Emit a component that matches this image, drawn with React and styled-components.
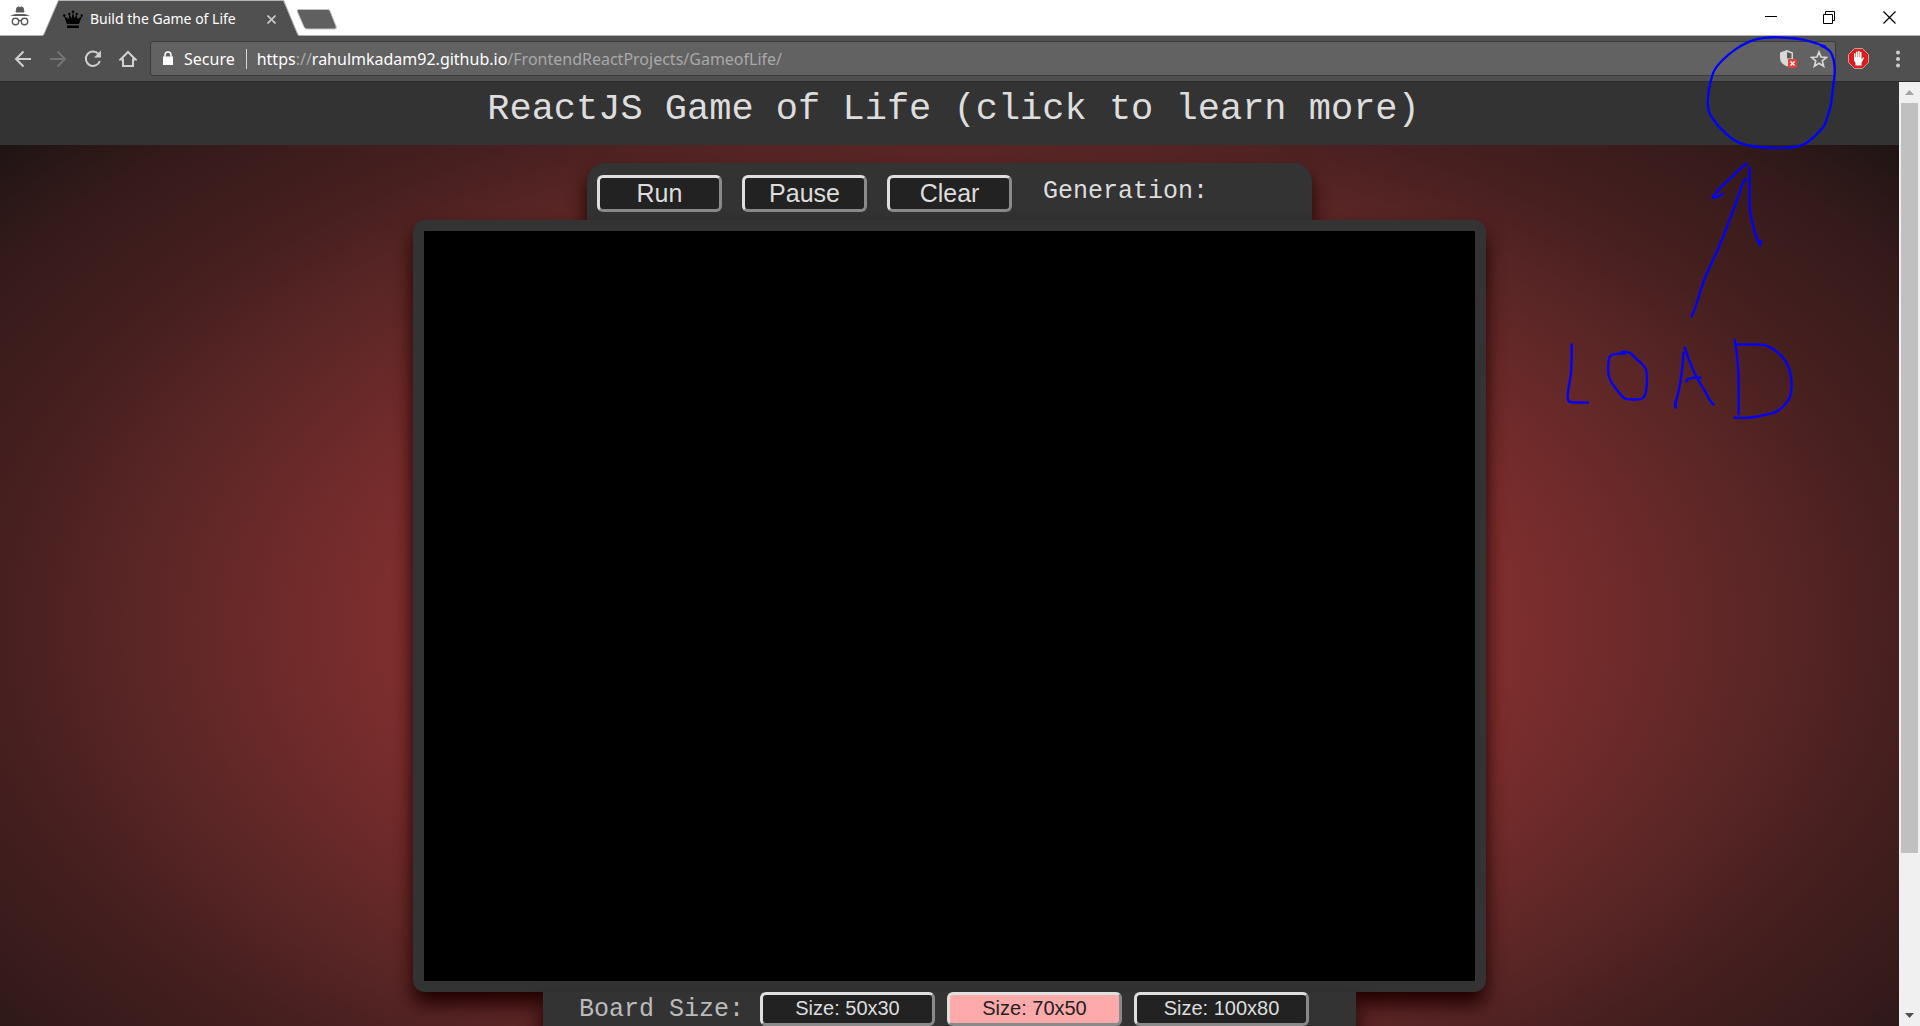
import React from "react";
import styled, { createGlobalStyle } from "styled-components";

const sans = `"Noto Sans", "Open Sans", sans-serif`;
const mono = `"Liberation Mono", "Courier New", monospace`;
const arial = `"Liberation Sans", Arial, sans-serif`;
const panel = "#333333";

const GlobalStyle = createGlobalStyle`
  * { box-sizing: border-box; }
  body { margin: 0; background: #fff; overflow: hidden; }
  button { padding: 0; border: 0; background: none; cursor: pointer; }
  svg { display: block; }
`;

const Browser = styled.div`
  display: flex;
  flex-direction: column;
  height: 100vh;
`;

/* ---------- tab strip ---------- */
const TabStrip = styled.div`
  display: flex;
  align-items: stretch;
  height: 36px;
  flex: none;
  background: linear-gradient(#fff 35px, #b4b4b4 35px);
`;
const Incognito = styled.div`
  padding: 6px 0 0 10px;
  width: 42px;
`;
const Tab = styled.div`
  display: grid;
  width: 257px;
  > * { grid-area: 1 / 1; }
`;
const TabBody = styled.div`
  display: flex;
  align-items: center;
  padding: 2px 24px 0 21px;
  font: 14px/20px ${sans};
  color: #fff;
  z-index: 1;
`;
const TabTitle = styled.span`
  flex: 1;
  margin-left: 7px;
  white-space: nowrap;
`;
const NewTab = styled.button`
  display: flex;
  align-items: flex-start;
  margin-left: -4px;
  padding-top: 8px;
`;
const WindowButtons = styled.div`
  display: flex;
  margin-left: auto;
`;
const WindowButton = styled.button`
  display: grid;
  place-items: center;
  width: 58px;
  height: 34px;
  &:last-child { width: 62px; }
`;

/* ---------- toolbar ---------- */
const Toolbar = styled.div`
  display: flex;
  align-items: center;
  flex: none;
  height: 46px;
  padding: 0 20px 0 13px;
  background: #505050;
  border-bottom: 1px solid #2b2b2b;
`;
const ToolButton = styled.button`
  display: grid;
  place-items: center;
  width: 20px;
  height: 36px;
  margin-right: 15px;
`;
const AddressBar = styled.div`
  display: flex;
  align-items: center;
  flex: 1;
  height: 35px;
  margin-left: -3px;
  padding: 0 7px 0 12px;
  background: #626262;
  border: 1px solid #3a3a3a;
  border-radius: 3px;
  font: 16px/24px ${sans};
  color: #fff;
`;
const Secure = styled.button`
  display: flex;
  align-items: center;
  gap: 11px;
  padding-right: 11px;
  margin-right: 10px;
  border-right: 1px solid #d8d8d8;
  font: 16px/20px ${sans};
  color: #fff;
`;
const Url = styled.div`
  flex: 1;
  white-space: nowrap;
  outline: none;
`;
const Muted = styled.span`
  color: #a9a9a9;
`;
const BarIcons = styled.div`
  display: flex;
  align-items: center;
  gap: 13px;
`;
const Extensions = styled.div`
  display: flex;
  align-items: center;
  gap: 27px;
  margin-left: 12px;
`;

/* ---------- page ---------- */
const Viewport = styled.div`
  display: flex;
  flex: 1;
  min-height: 0;
`;
const Page = styled.div`
  flex: 1;
  overflow: hidden;
`;
const PageBody = styled.div`
  padding-bottom: 48px;
  background: radial-gradient(
    #b83c3c,
    #7f2e2e 41%,
    #582525 62%,
    #471f1f 71%,
    #341a1a 85%,
    #1d1413 95%,
    #141010
  );
`;
const Header = styled.header`
  height: 63px;
  padding: 6px 0 0 8px;
  margin-bottom: 18px;
  background: ${panel};
  text-align: center;
`;
const Title = styled.h1`
  margin: 0;
  font: 400 37px/43px ${mono};
`;
const TitleLink = styled.a`
  color: #ddd;
  text-decoration: none;
`;
const Game = styled.main`
  display: flex;
  flex-direction: column;
  align-items: center;
`;
const Panel = styled.div`
  display: flex;
  background: ${panel};
  box-shadow: 0 12px 19px #200000;
`;
const Controls = styled(Panel)`
  align-items: flex-start;
  gap: 20px;
  width: 725px;
  height: 57px;
  padding: 12px 10px 0;
  border-radius: 19px 19px 0 0;
`;
const Board = styled(Panel)`
  width: 1073px;
  height: 772px;
  border: 11px solid ${panel};
  border-radius: 12px;
  background: #000;
  z-index: 1;
`;
const Sizes = styled(Panel)`
  align-items: flex-start;
  gap: 12px;
  width: 813px;
  height: 129px;
  padding: 0 47px 0 36px;
  z-index: 1;
`;
const GameButton = styled.button`
  width: ${(p) => (p.$small ? 175 : 125)}px;
  height: ${(p) => (p.$small ? 34 : 37)}px;
  padding-bottom: ${(p) => (p.$small ? 2 : 0)}px;
  border: 3px solid;
  border-color: #dfdfdf #8a8a8a #8a8a8a #dfdfdf;
  border-radius: 6px;
  background: ${(p) => (p.$active ? "#ffaaaa" : "#222222")};
  color: ${(p) => (p.$active ? "#222222" : "#dddddd")};
  font: ${(p) => (p.$small ? "20px/26px" : "25px/31px")} ${arial};
`;
const Counter = styled.output`
  margin-left: 11px;
  font: 25px/34px ${mono};
  color: #ddd;
`;
const SizeLabel = styled.span`
  flex: 1;
  font: 25px/36px ${mono};
  color: #bbb;
`;

/* ---------- scrollbar ---------- */
const ScrollBar = styled.div`
  display: flex;
  flex-direction: column;
  align-items: center;
  justify-content: space-between;
  width: 21px;
  background: #f0f0f0;
`;
const ScrollArrow = styled.button`
  display: grid;
  place-items: center;
  width: 21px;
  height: 21px;
`;
const Track = styled.div`
  display: flex;
  flex: 1;
  flex-direction: column;
`;
const Thumb = styled.div`
  width: 17px;
  height: 83.2%;
  background: #c0c0c0;
`;

/* Pen marks lie over both the toolbar and the page. */
const Ink = styled.svg`
  position: absolute;
  top: 0;
  right: 0;
  z-index: 5;
  pointer-events: none;
`;

const smooth = (pts) => {
  let d = `M${pts[0]}`;
  for (let i = 1; i < pts.length - 1; i++) {
    const [x, y] = pts[i];
    const [nx, ny] = pts[i + 1];
    d += ` Q${x},${y} ${(x + nx) / 2},${(y + ny) / 2}`;
  }
  return `${d} L${pts[pts.length - 1]}`;
};

const circle = [[605,138],[625,143],[590,130],[550,118],[500,113],[455,111],[410,116],[370,132],[325,163],[285,203],[272,240],[263,290],[264,330],[275,352],[300,385],[345,425],[380,436],[430,443],[500,444],[545,438],[570,422],[614,380],[622,350],[633,320],[638,265],[645,225],[643,180],[630,150],[605,138]];

const strokes = [
  [[455,529],[465,510],[480,455],[500,400],[540,317],[570,235],[592,180],[606,133],[617,116]],
  [[621,71],[605,80],[575,112],[540,143],[518,172],[518,173],[532,172],[548,161]],
  [[629,83],[628,190],[634,240],[648,290],[661,316],[661,317],[661,302]],
  [[95,613],[96,690],[84,750],[82,785],[100,787],[144,788]],
  [[256,640],[238,636],[262,634],[278,644],[288,656],[308,672],[321,692],[321,735],[316,768],[302,779],[258,778],[246,770],[206,718],[204,680],[207,650],[220,642],[256,640]],
  [[431,638],[426,700],[416,755],[407,785],[406,803]],
  [[405,786],[408,800]],
  [[434,623],[452,675],[475,722],[492,747],[508,780],[521,794]],
  [[440,725],[441,719],[441,718],[460,713],[482,713]],
  [[584,599],[596,660],[596,823]],
  [[588,614],[665,612],[690,620],[730,650],[752,692],[756,740],[750,778],[715,815],[680,824],[630,834],[584,833]],
];

const Annotation = () => (
  <Ink width="380" height="440" fill="none" stroke="#0000ff" strokeWidth="7" strokeLinecap="round" strokeLinejoin="round">
    <g transform="translate(80 0) scale(0.3333)"><path d={smooth(circle)} /></g>
    <g transform="translate(0 140) scale(0.3333)">
      {strokes.map((s, i) => <path key={i} d={smooth(s)} />)}
    </g>
  </Ink>
);

export default function App() {
  return (
    <Browser>
      <GlobalStyle />
      <TabStrip>
        <Incognito>
          <svg width="20" height="20" fill="none" stroke="#5a5a5a">
            <path d="M6 6 7 1.5 8.500 1 10 1.600 11.500 1 13 1.500 14 6Z" fill="#5a5a5a" />
            <path d="M0 10 5 8H15L20 10Z" fill="#5a5a5a" stroke="none" />
            <circle cx="5.500" cy="15.500" r="3.200" strokeWidth="1.400" />
            <circle cx="14.500" cy="15.500" r="3.200" strokeWidth="1.400" />
            <path d="M8.500 15q1.500-1 3 0" strokeWidth="1.300" />
          </svg>
        </Incognito>
        <Tab>
          <svg width="258" height="36">
            <path d="M0 36 1.500 35 16 1 17 0H241L242 1 256 35 258 36Z" fill="#505050" />
            <path d="M0 35.500 1.500 35 16.500.500H241.500L256 35 258 35.500" fill="none" stroke="#b4b4b4" />
          </svg>
          <TabBody>
            <svg width="20" height="19" viewBox="0 0 20 19">
              <path d="M4 14 1 6 5.500 9 6.500 4 8.500 8.500 10 2 11.500 8.500 13.500 4 14.500 9 19 6 16 14ZM4 15.500H16V18H4Z" />
              <circle cx="10" cy="1.800" r="1.300" /><circle cx="1.200" cy="5.500" r="1.200" /><circle cx="18.800" cy="5.500" r="1.200" />
              <circle cx="6.300" cy="4" r="1.200" /><circle cx="13.700" cy="4" r="1.200" />
            </svg>
            <TabTitle>Build the Game of Life</TabTitle>
            <svg width="9" height="9" stroke="#c8c8c8" strokeWidth="1.700"><path d="M.5.500l8 8M8.500.500l-8 8" /></svg>
          </TabBody>
        </Tab>
        <NewTab aria-label="New tab">
          <svg width="44" height="23">
            <path d="M3.500 1.500H33q1.500 0 2 1.500l6 15q1 3-1 3H12q-2 0-3-2L2.500 4q-1-2.500 1-2.500Z" fill="#606060" stroke="#c4c4c4" />
          </svg>
        </NewTab>
        <WindowButtons>
          <WindowButton aria-label="Minimize"><svg width="12" height="12"><path d="M0 5.500H12" stroke="#000" /></svg></WindowButton>
          <WindowButton aria-label="Restore"><svg width="13" height="13" fill="none" stroke="#000"><path d="M.5 3.500h9v9h-9ZM2.500 3.500V.500h9v9h-2" /></svg></WindowButton>
          <WindowButton aria-label="Close"><svg width="13" height="13" stroke="#000" strokeWidth="1.200"><path d="M.5.500l12 12M12.500.500l-12 12" /></svg></WindowButton>
        </WindowButtons>
      </TabStrip>

      <Toolbar>
        <ToolButton aria-label="Back">
          <svg width="18" height="18" fill="none" stroke="#d0d0d0" strokeWidth="2"><path d="M17 9H3M9.500 1.500 2 9l7.500 7.500" /></svg>
        </ToolButton>
        <ToolButton aria-label="Forward">
          <svg width="18" height="18" fill="none" stroke="#747474" strokeWidth="2"><path d="M1 9H15M8.500 1.500 16 9l-7.500 7.500" /></svg>
        </ToolButton>
        <ToolButton aria-label="Reload">
          <svg width="18" height="18" fill="none" stroke="#d0d0d0" strokeWidth="2"><path d="M14.500 4A7.200 7.200 0 1 0 15.900 11" /><path d="M17 .500V7.500H10Z" fill="#d0d0d0" stroke="none" /></svg>
        </ToolButton>
        <ToolButton aria-label="Home">
          <svg width="18" height="18" fill="none" stroke="#d0d0d0" strokeWidth="2"><path d="M1.500 9.500 9 2l7.500 7.500H14V16H4V9.500Z" /></svg>
        </ToolButton>
        <AddressBar>
          <Secure>
            <svg width="10" height="15"><path d="M0 5.500h10V14H0Z" fill="#fff" /><path d="M2 6V4a3 3 0 0 1 6 0v2" fill="none" stroke="#fff" strokeWidth="1.500" /></svg>
            Secure
          </Secure>
          <Url role="textbox" tabIndex={0} aria-label="Address">
            https<Muted>://</Muted>rahulmkadam92.github.io<Muted>/FrontendReactProjects/GameofLife/</Muted>
          </Url>
          <BarIcons>
            <ToolIcon label="Unsafe scripts blocked">
              <svg width="17" height="19">
                <path d="M7 1 0 3.500V9q0 5.500 7 8.500l6-3V3.500Z" fill="#d8d8d8" />
                <path d="M7 3 11.500 4.500V9.500H7Z" fill="#5a5a5a" />
                <rect x="8" y="10" width="9" height="9" rx="1" fill="#db4437" />
                <path d="M10.500 12.500l4 4M14.500 12.500l-4 4" stroke="#fff" strokeWidth="1.300" />
              </svg>
            </ToolIcon>
            <ToolIcon label="Bookmark">
              <svg width="18" height="18" fill="none" stroke="#d8d8d8" strokeWidth="1.700"><path d="M9 2l2 5 5.500.400-4.200 3.500 1.300 5.300L9 13.300l-4.600 2.900 1.300-5.300L1.500 7.400 7 7Z" /></svg>
            </ToolIcon>
          </BarIcons>
        </AddressBar>
        <Extensions>
          <ToolIcon label="Ad blocker">
            <svg width="21" height="21" viewBox="0 0 21 21">
              <path d="M6.500.500h8l6 6v8l-6 6h-8l-6-6v-8Z" fill="#e01b1b" stroke="#b9a4a4" />
              <path d="M6 9.500V5.500q.8-1 1.500 0V9h.5V4q.8-1 1.600 0v5h.4V3.200q.8-1 1.600 0V9h.4V4.200q.8-1 1.500 0V11l1.500-1.600q1.200-.4 1 .6L13.500 15v2.500h-6V15L6 12.500Z" fill="#fff" />
            </svg>
          </ToolIcon>
          <ToolIcon label="Menu">
            <svg width="4" height="18" fill="#d0d0d0"><circle cx="2" cy="2.500" r="2" /><circle cx="2" cy="9" r="2" /><circle cx="2" cy="15.500" r="2" /></svg>
          </ToolIcon>
        </Extensions>
      </Toolbar>

      <Viewport>
        <Page>
          <PageBody>
            <Header>
              <Title><TitleLink href="#learn">ReactJS Game of Life (click to learn more)</TitleLink></Title>
            </Header>
            <Game>
              <Controls>
                <GameButton>Run</GameButton>
                <GameButton>Pause</GameButton>
                <GameButton>Clear</GameButton>
                <Counter>Generation:</Counter>
              </Controls>
              <Board />
              <Sizes>
                <SizeLabel>Board Size:</SizeLabel>
                <GameButton $small>Size: 50x30</GameButton>
                <GameButton $small $active>Size: 70x50</GameButton>
                <GameButton $small>Size: 100x80</GameButton>
              </Sizes>
            </Game>
          </PageBody>
        </Page>
        <ScrollBar>
          <ScrollArrow aria-label="Scroll up"><svg width="9" height="5"><path d="M0 5 4.500 0 9 5Z" fill="#a3a3a3" /></svg></ScrollArrow>
          <Track><Thumb /></Track>
          <ScrollArrow aria-label="Scroll down"><svg width="9" height="5"><path d="M0 0 4.500 5 9 0Z" fill="#505050" /></svg></ScrollArrow>
        </ScrollBar>
      </Viewport>
      <Annotation />
    </Browser>
  );
}

function ToolIcon({ label, children }) {
  return <button aria-label={label}>{children}</button>;
}
